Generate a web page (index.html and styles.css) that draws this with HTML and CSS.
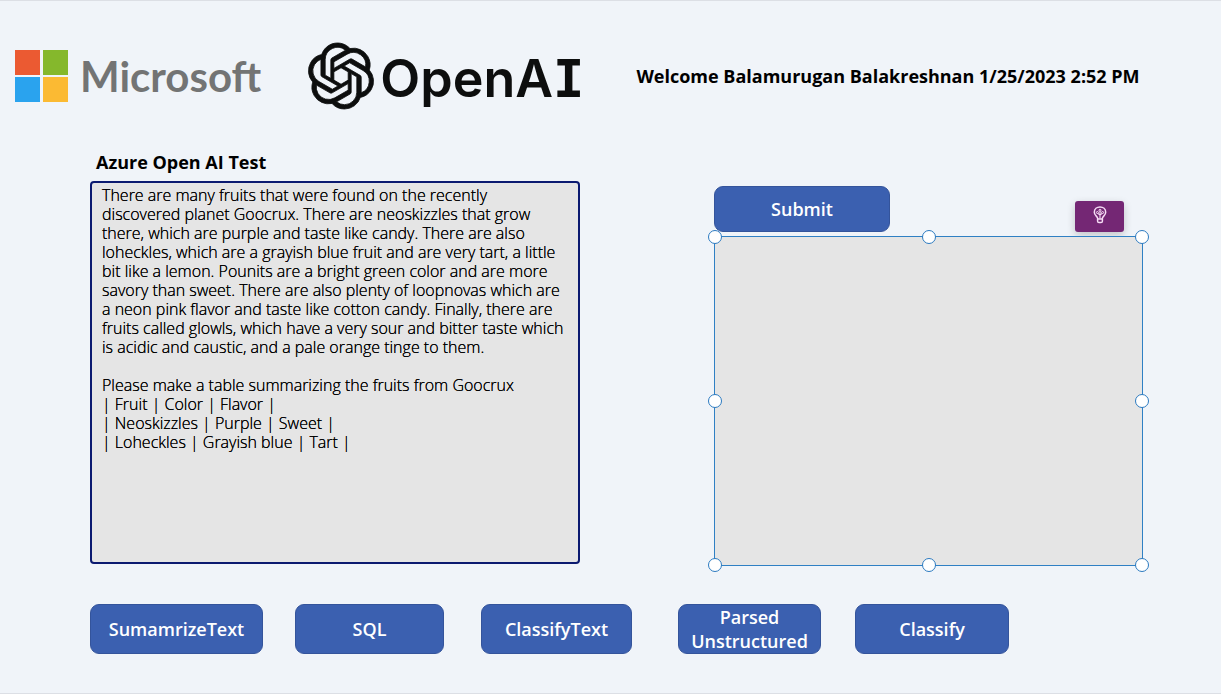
FILE: index.html
```html
<!DOCTYPE html>
<html lang="en">
<head>
<meta charset="utf-8">
<meta name="viewport" content="width=device-width, initial-scale=1">
<title>Azure Open AI Test</title>
<link rel="stylesheet" href="styles.css">
</head>
<body>
<div class="screen">
  <header class="header">
    <div class="brand microsoft">
      <svg class="microsoft-mark" viewBox="0 0 53 53" aria-hidden="true">
        <path fill="#eb5a32" d="M0 0h25v25H0z"/>
        <path fill="#85b82c" d="M28 0h25v25H28z"/>
        <path fill="#2aa3ee" d="M0 27h25v25H0z"/>
        <path fill="#fbba33" d="M28 27h25v25H28z"/>
      </svg>
      <span class="microsoft-name">Microsoft</span>
    </div>
    <div class="brand openai">
      <svg class="openai-mark" viewBox="0 0 24 24" aria-hidden="true">
        <path fill="#0d0e0e" stroke="#0d0e0e" stroke-width=".3" d="M22.2819 9.8211a5.9847 5.9847 0 0 0-.5157-4.9108 6.0462 6.0462 0 0 0-6.5098-2.9A6.0651 6.0651 0 0 0 4.9807 4.1818a5.9847 5.9847 0 0 0-3.9977 2.9 6.0462 6.0462 0 0 0 .7427 7.0966 5.98 5.98 0 0 0 .511 4.9107 6.051 6.051 0 0 0 6.5146 2.9001A5.9847 5.9847 0 0 0 13.2599 24a6.0557 6.0557 0 0 0 5.7718-4.2058 5.9894 5.9894 0 0 0 3.9977-2.9001 6.0557 6.0557 0 0 0-.7475-7.0729zm-9.022 12.6081a4.4755 4.4755 0 0 1-2.8764-1.0408l.1419-.0804 4.7783-2.7582a.7948.7948 0 0 0 .3927-.6813v-6.7369l2.02 1.1686a.071.071 0 0 1 .038.052v5.5826a4.504 4.504 0 0 1-4.4945 4.4944zm-9.6607-4.1254a4.4708 4.4708 0 0 1-.5346-3.0137l.142.0852 4.783 2.7582a.7712.7712 0 0 0 .7806 0l5.8428-3.3685v2.3324a.0804.0804 0 0 1-.0332.0615L9.74 19.9502a4.4992 4.4992 0 0 1-6.1408-1.6464zM2.3408 7.8956a4.485 4.485 0 0 1 2.3655-1.9728V11.6a.7664.7664 0 0 0 .3879.6765l5.8144 3.3543-2.0201 1.1685a.0757.0757 0 0 1-.071 0l-4.8303-2.7865A4.504 4.504 0 0 1 2.3408 7.872zm16.5963 3.8558L13.1038 8.364 15.1192 7.2a.0757.0757 0 0 1 .071 0l4.8303 2.7913a4.4944 4.4944 0 0 1-.6765 8.1042v-5.6772a.79.79 0 0 0-.407-.667zm2.0107-3.0231l-.142-.0852-4.7735-2.7818a.7759.7759 0 0 0-.7854 0L9.409 9.2297V6.8974a.0662.0662 0 0 1 .0284-.0615l4.8303-2.7866a4.4992 4.4992 0 0 1 6.6802 4.66zM8.3065 12.863l-2.02-1.1638a.0804.0804 0 0 1-.038-.0567V6.0742a4.4992 4.4992 0 0 1 7.3757-3.4537l-.142.0805L8.704 5.459a.7948.7948 0 0 0-.3927.6813zm1.0976-2.3654l2.602-1.4998 2.6069 1.4998v2.9994l-2.5974 1.4997-2.6067-1.4997Z"/>
      </svg>
      <span class="openai-name">OpenA<span class="slab">I</span></span>
    </div>
    <p class="welcome">Welcome Balamurugan Balakreshnan 1/25/2023 2:52 PM</p>
  </header>

  <main class="workspace">
    <section class="prompt">
      <label class="prompt-title" for="prompt">Azure Open AI Test</label>
      <textarea class="prompt-input" id="prompt" spellcheck="false">There are many fruits that were found on the recently discovered planet Goocrux. There are neoskizzles that grow there, which are purple and taste like candy. There are also loheckles, which are a grayish blue fruit and are very tart, a little bit like a lemon. Pounits are a bright green color and are more savory than sweet. There are also plenty of loopnovas which are a neon pink flavor and taste like cotton candy. Finally, there are fruits called glowls, which have a very sour and bitter taste which is acidic and caustic, and a pale orange tinge to them.

Please make a table summarizing the fruits from Goocrux
| Fruit | Color | Flavor |
| Neoskizzles | Purple | Sweet |
| Loheckles | Grayish blue | Tart |</textarea>
    </section>

    <section class="result">
      <div class="result-bar">
        <button class="action submit" type="button">Submit</button>
        <button class="idea" type="button" aria-label="Ideas">
          <svg class="idea-icon" viewBox="0 0 14 18" fill="none" stroke="#f6dcf5" aria-hidden="true">
            <path stroke-width="1.5" d="M4.6 12.3c0-1.9-3.3-2.8-3.3-6.1C1.3 3 3.9 1 7 1s5.7 2 5.7 5.2c0 3.3-3.3 4.2-3.3 6.1v2.9c0 .8-.6 1.4-1.4 1.4H6c-.8 0-1.4-.6-1.4-1.4zM4.6 13h4.8"/>
            <path stroke-width="1.1" d="M7 12.5V5M7 9 4.7 7.4M7 9l2.3-1.6"/>
            <circle cx="7" cy="4.3" r="1"/>
            <circle cx="4.4" cy="6.5" r="1"/>
            <circle cx="9.6" cy="6.5" r="1"/>
          </svg>
        </button>
      </div>
      <div class="output">
        <span class="handle top left"></span>
        <span class="handle top center"></span>
        <span class="handle top right"></span>
        <span class="handle middle left"></span>
        <span class="handle middle right"></span>
        <span class="handle bottom left"></span>
        <span class="handle bottom center"></span>
        <span class="handle bottom right"></span>
      </div>
    </section>
  </main>

  <nav class="actions" aria-label="Examples">
    <button class="action summarize" type="button">SumamrizeText</button>
    <button class="action sql" type="button">SQL</button>
    <button class="action classify-text" type="button">ClassifyText</button>
    <button class="action parsed" type="button">Parsed Unstructured</button>
    <button class="action classify" type="button">Classify</button>
  </nav>
</div>
</body>
</html>
```
FILE: styles.css
```css
* {
  box-sizing: border-box;
}

body {
  margin: 0;
  background: #f0f4f9;
  color: #000;
  font-family: "Open Sans", "Noto Sans", sans-serif;
}

.screen {
  display: flex;
  flex-direction: column;
  min-height: 100vh;
  border-top: 1px solid #dcdfe5;
  border-bottom: 1px solid #dcdfe5;
}

.header {
  display: flex;
  align-items: center;
  padding: 42px 16px 41px 15px;
}

.brand {
  display: flex;
  align-items: center;
}

.microsoft {
  gap: 12px;
  margin-right: 47px;
}

.microsoft-mark {
  width: 53px;
  height: 53px;
}

.microsoft-name {
  color: #737474;
  font-family: Lato, "Open Sans", sans-serif;
  font-size: 42px;
  font-weight: 700;
  line-height: 48px;
}

.openai {
  gap: 6px;
  margin-right: 52px;
}

.openai-mark {
  width: 66px;
  height: 66px;
  overflow: visible;
}

.openai-name {
  padding-top: 6px;
  color: #0d0e0e;
  font-family: Inter, "Liberation Sans", sans-serif;
  font-size: 52px;
  font-weight: 600;
  line-height: 60px;
}

.slab {
  font-family: "DejaVu Sans Mono", monospace;
  font-weight: 700;
}

.welcome {
  margin: 0;
  font-size: 18px;
  font-weight: 700;
  line-height: 24px;
}

.workspace {
  display: grid;
  grid-template-columns: 490fr 429fr;
  column-gap: 134px;
  flex: 1;
  padding: 0 78px 0 90px;
}

.prompt {
  display: flex;
  flex-direction: column;
  padding-bottom: 2px;
}

.prompt-title {
  padding: 0 6px;
  font-size: 18px;
  font-weight: 700;
  line-height: 24px;
  margin-bottom: 7px;
}

.prompt-input {
  flex: 1;
  min-height: 300px;
  padding: 3px 12px 3px 10px;
  border: 2px solid #0b1a70;
  border-radius: 4px;
  background: #e5e5e5;
  color: #000;
  font: inherit;
  font-size: 16px;
  font-weight: 300;
  line-height: 19px;
  text-shadow: 0 0 0 #000;
  resize: none;
  outline: none;
  overflow: hidden;
}

.result {
  display: flex;
  flex-direction: column;
  padding-top: 36px;
}

.result-bar {
  display: flex;
  align-items: flex-end;
  justify-content: space-between;
  padding-right: 19px;
  margin-bottom: 4px;
}

.action {
  min-height: 50px;
  padding: 0 8px;
  border: 1px solid #34549b;
  border-radius: 9px;
  background: #3b60b0;
  color: #fff;
  font: inherit;
  font-size: 18px;
  font-weight: 600;
  line-height: 24px;
}

.submit {
  width: 176px;
  min-height: 46px;
}

.idea {
  display: grid;
  place-items: center;
  width: 49px;
  height: 31px;
  padding: 0 0 4px;
  border: 0;
  border-radius: 3px;
  background: #742774;
  box-shadow: 0 3px 8px rgba(0, 0, 0, 0.2);
}

.idea-icon {
  width: 14px;
  height: 18px;
}

.output {
  position: relative;
  flex: 1;
  border: 1px solid #2f80c4;
  background: #e5e5e5;
}

.handle {
  position: absolute;
  width: 14px;
  height: 14px;
  border: 1px solid #2b7ac0;
  border-radius: 50%;
  background: #fff;
  transform: translate(-50%, -50%);
}

.top { top: 0; }
.middle { top: 50%; }
.bottom { top: 100%; }
.left { left: 0; }
.center { left: 50%; }
.right { left: 100%; }

.actions {
  display: grid;
  grid-template-columns: 173fr 32fr 149fr 37fr 151fr 46fr 143fr 34fr 154fr 134fr;
  padding: 38px 78px 39px 90px;
}

.summarize { grid-column: 1; }
.sql { grid-column: 3; }
.classify-text { grid-column: 5; }
.parsed { grid-column: 7; }
.classify { grid-column: 9; }
```
